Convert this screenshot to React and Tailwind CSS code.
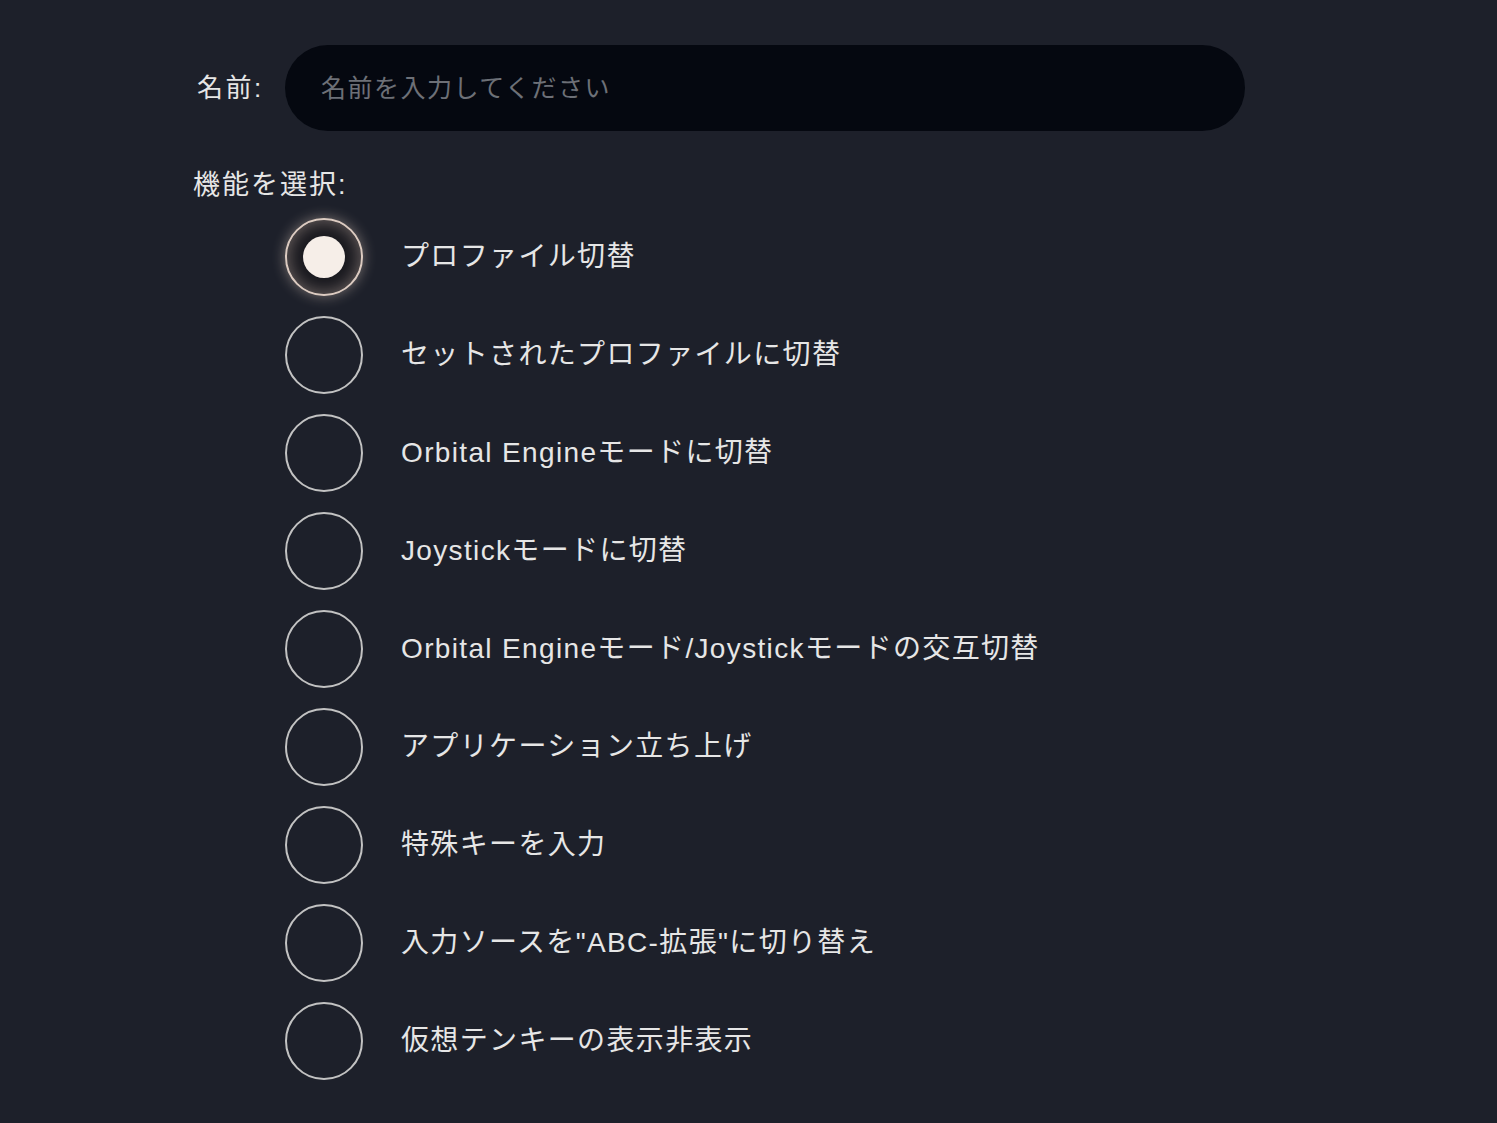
import React, { useState } from "react";

const options = [
  "プロファイル切替",
  "セットされたプロファイルに切替",
  "Orbital Engineモードに切替",
  "Joystickモードに切替",
  "Orbital Engineモード/Joystickモードの交互切替",
  "アプリケーション立ち上げ",
  "特殊キーを入力",
  "入力ソースを\"ABC-拡張\"に切り替え",
  "仮想テンキーの表示非表示",
];

const font = { fontFamily: '"Liberation Sans", "Noto Sans CJK JP", sans-serif' };

export default function App() {
  const [name, setName] = useState("");
  const [selected, setSelected] = useState(0);

  return (
    <div className="min-h-screen bg-[#1d202a] text-[#e6e6e6] pl-[193px] pt-[45px]" style={font}>
      <div className="flex items-center">
        <label className="w-[92px] pl-[4px] text-[26px] tracking-[2.5px]">名前:</label>
        <input
          value={name}
          onChange={(e) => setName(e.target.value)}
          placeholder="名前を入力してください"
          className="w-[960px] h-[86px] rounded-full bg-[#050810] pl-[36px] text-[25px] tracking-[1.5px] text-[#e6e6e6] placeholder:text-[#6d7077] outline-none"
        />
      </div>

      <div className="mt-[38px] text-[27px] tracking-[2px] leading-[32px]">機能を選択:</div>

      <div className="flex flex-col gap-[20px] pl-[92px] mt-[17px]">
        {options.map((opt, i) => (
          <label key={i} className="flex items-center cursor-pointer" onClick={() => setSelected(i)}>
            {selected === i ? (
              <span className="w-[78px] h-[78px] rounded-full border-[2.5px] border-[#dccbc1] bg-[#17171d] flex items-center justify-center shadow-[0_0_14px_rgba(235,215,200,0.45),inset_0_0_18px_rgba(210,190,180,0.5)]">
                <span className="w-[42px] h-[42px] rounded-full bg-[#f6eee8]" />
              </span>
            ) : (
              <span className="w-[78px] h-[78px] rounded-full border-[2.5px] border-[#c2c2c2]" />
            )}
            <span className="ml-[38px] text-[28px] tracking-[1.35px]">{opt}</span>
          </label>
        ))}
      </div>
    </div>
  );
}
